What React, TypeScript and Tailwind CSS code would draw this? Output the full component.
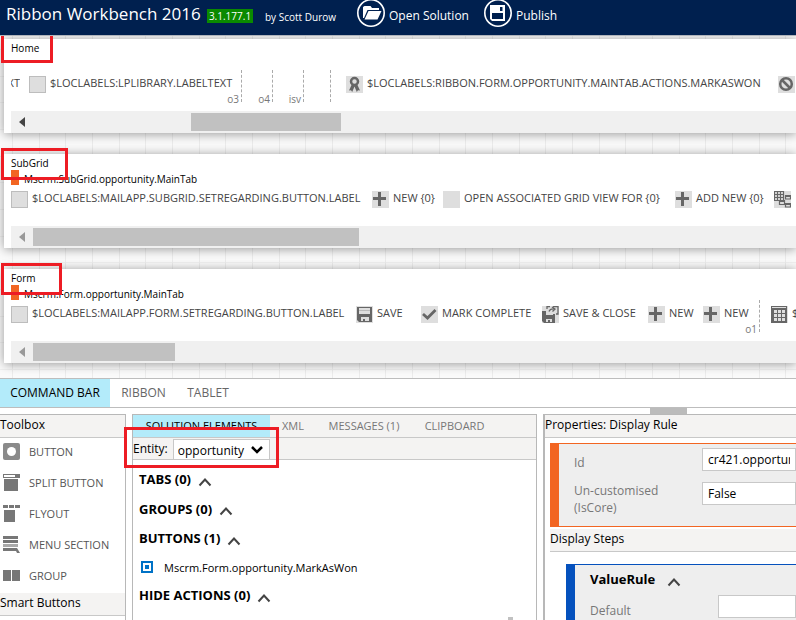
import React from "react";

const plain = (
  <svg viewBox="0 0 17 17" className="size-[17px] shrink-0">
    <rect x="0.5" y="0.5" width="16" height="16" fill="#dedede" stroke="#bdbdbd" />
  </svg>
);

function Icon({ children }: { children?: React.ReactNode }) {
  return (
    <svg viewBox="0 0 17 17" className="size-[17px] shrink-0 bg-[#dedede]" fill="#666">
      {children}
    </svg>
  );
}

const plus = (
  <Icon>
    <path d="M6 1h3v5h5v3H9v6H6V9H1V6h5z" />
  </Icon>
);
const award = (
  <Icon>
    <circle cx="8.500" cy="5.500" r="3.500" fill="none" stroke="#666" strokeWidth="2.500" />
    <path d="M5.500 9l-2.500 5.500 2-.3 1.200 1.800 2.300-5.500 2.300 5.500 1.200-1.800 2 .3L11.500 9z" />
  </Icon>
);
const ban = (
  <Icon>
    <g fill="none" stroke="#666" strokeWidth="2.500">
      <circle cx="8" cy="8" r="5.800" />
      <path d="M4 4l8 8" />
    </g>
  </Icon>
);
const disk = (
  <Icon>
    <path d="M1 1h15v15H3l-2-2zM3 2v6h11V2zM5 11v4h2v-2h2v2h4v-4z" fillRule="evenodd" />
    <path d="M3 4h11v1H3z" fill="#bbb" />
  </Icon>
);
const check = (
  <Icon>
    <path d="M2 8l4.500 4L14.500 4" fill="none" stroke="#666" strokeWidth="2.800" />
  </Icon>
);
const saveClose = (
  <Icon>
    <path d="M0 5h4v4h7V8h2v9H2l-2-2zM4 13v3h2v-2h2v2h2v-3z" fillRule="evenodd" />
    <path d="M5 3V.700h3M11 .700h5V8h-2M7 5.500c1-3 3-3 6-2.500M10 1l3 2-2.500 2.500" fill="none" stroke="#666" strokeWidth="1.300" />
  </Icon>
);
const table = (
  <Icon>
    <path
      d="M0 0h16v17H0zM1 1v1h14V1zM3 4v3h3V4zm4 0v3h3V4zm4 0v3h3V4zM3 8v3h3V8zm4 0v3h3V8zm4 0v3h3V8zM3 12v3h3v-3zm4 0v3h3v-3zm4 0v3h3v-3z"
      fillRule="evenodd"
    />
  </Icon>
);
const gridTree = (
  <Icon>
    <path d="M.5.500h9v9h-9zM.5 3.500h9M.5 6.500h9M3.500.5v9M6.500.5v9M5.500 9.500h5v4h-5zM11.500 5h5v3h-5zM11.500 12.500h5v3.500h-5z" fill="none" stroke="#666" strokeWidth="1.200" />
    <path d="M11 4h6v2h-6zM11 12h6v2h-6zM5 9h6v2H5z" />
  </Icon>
);

function Command({ icon, label, className = "" }: { icon?: React.ReactNode; label: string; className?: string }) {
  return (
    <button type="button" className={`flex h-[17px] shrink-0 items-center gap-1 text-left text-[11px] leading-[15px] whitespace-nowrap text-[#444] ${className}`}>
      {icon}
      <span className="pb-1">{label}</span>
    </button>
  );
}

function Group({ name, className = "", children }: { name: string; className?: string; children?: React.ReactNode }) {
  return (
    <div className={`relative flex h-8 shrink-0 border-r border-dashed border-[#aaa] pt-[6px] ${className}`}>
      {children}
      <span className="absolute right-[2px] bottom-[-4px] text-[10px] leading-[14px] text-[#777]">{name}</span>
    </div>
  );
}

function Area({ title, tab, thumb, active = false, mark, children }: { title: string; tab?: string; thumb: string; active?: boolean; mark: string; children: React.ReactNode }) {
  return (
    <section className="relative ml-1 bg-white pl-[7px] shadow-[0_1px_10px_rgba(0,0,0,0.4)]">
      <h2 className="h-4 pt-[2px] text-[10px] leading-[14px]">{title}</h2>
      <div className="flex h-[15px] gap-[5px]">
        {tab && <span className="h-full w-2 bg-[#f26522]" />}
        {tab && <span className="pt-[2px] text-[10px] leading-[14px]">{tab}</span>}
      </div>
      <div className="flex h-[41px] overflow-hidden">{children}</div>
      <div className="flex h-[22px] items-center bg-[#f0f0f0]">
        <svg viewBox="0 0 22 22" className="w-[22px] shrink-0">
          <path d="M14 6v10l-6-5z" fill={active ? "#444" : "#999"} />
        </svg>
        <span className={`h-[18px] bg-[#c1c1c1] ${thumb}`} />
      </div>
      <span className={`pointer-events-none absolute border-[3px] border-[#ed1c24] ${mark}`} />
    </section>
  );
}

function Caret() {
  return (
    <svg viewBox="0 0 14 10" className="mt-1 w-[14px] shrink-0">
      <path d="M1.500 8.500L7 2.500l5.500 6" fill="none" stroke="#444" strokeWidth="2" />
    </svg>
  );
}

function Tool({ label, children }: { label: string; children: React.ReactNode }) {
  return (
    <button type="button" className="flex h-[27px] items-center gap-[9px] pl-[3px] text-[11px] leading-4 whitespace-nowrap text-[#555]">
      <svg viewBox="0 0 17 17" className="size-[17px] shrink-0" fill="#777">
        {children}
      </svg>
      {label}
    </button>
  );
}

const bar = "h-[23px] shrink-0 border-b border-[#c8c8c8] bg-[#f4f3f2] leading-5 whitespace-nowrap";
const field = "h-[23px] min-w-0 flex-1 border border-[#c8c8c8] bg-white px-[5px] text-[12px] leading-4 text-black";

export default function App() {
  return (
    <div className="flex h-screen flex-col overflow-hidden bg-white font-['Open_Sans','Noto_Sans',sans-serif] text-black">
      <header className="flex h-9 shrink-0 items-start border-b border-[#b0b4bb] bg-[#00204f] pl-[6px] whitespace-nowrap text-white">
        <h1 className="w-[201px] text-[17px] leading-7">Ribbon Workbench 2016</h1>
        <span className="mt-[9px] h-[14px] w-[46px] bg-[#0a8a00] text-center text-[10px] leading-[14px]">3.1.177.1</span>
        <span className="mt-[9px] ml-3 w-[92px] text-[10px] leading-4">by Scott Durow</span>
        <button type="button" className="flex w-[127px] items-start gap-1 text-[12px] leading-8">
          <svg viewBox="0 0 28 28" className="size-7" fill="none">
            <circle cx="14" cy="13" r="13.200" stroke="#fff" strokeWidth="1.600" />
            <path d="M6 18V7l1.500-1h6L15 8h7v2H10.500L7 18z" fill="#fff" />
            <path d="M7.500 19.500L11.500 11h13l-4 8.500z" fill="#fff" />
          </svg>
          Open Solution
        </button>
        <button type="button" className="flex items-start gap-1 text-[12px] leading-8">
          <svg viewBox="0 0 28 28" className="size-7" fill="none">
            <circle cx="14" cy="13" r="13.200" stroke="#fff" strokeWidth="1.600" />
            <path d="M6 5h15v16H8l-2-2zM8 13v6h11v-6zM16 7h2.500v4H16z" fill="#fff" fillRule="evenodd" />
          </svg>
          Publish
        </button>
      </header>

      <main className="flex shrink-0 flex-col gap-[21px] overflow-hidden bg-[#fafafa] bg-[linear-gradient(90deg,#ececec_1px,transparent_1px,transparent_27px,#ececec_27px,#ececec_28px,transparent_28px,transparent_53px,#ececec_53px,#ececec_54px,transparent_54px),linear-gradient(#f0f0f0_1px,transparent_1px,transparent_27px,#f0f0f0_27px,#f0f0f0_28px,transparent_28px,transparent_53px,#f0f0f0_53px,#f0f0f0_54px,transparent_54px)] bg-size-[80px_80px] bg-position-[12px_13px] pt-[3px] pb-[15px]">
        <Area title="Home" active thumb="ml-[158px] w-[150px]" mark="-top-[6px] -left-[3px] h-[30px] w-[52px]">
          <Group name="o3" className="w-[231px]">
            <span className="flex w-[9px] shrink-0 justify-end overflow-hidden text-[11px] leading-[13px] text-[#444]">LABELTEXT</span>
            <Command icon={plain} label="$LOCLABELS:LPLIBRARY.LABELTEXT" className="ml-[9px]" />
          </Group>
          <Group name="o4" className="w-[31px]" />
          <Group name="isv" className="w-[31px]" />
          <Group name="" className="w-[27px]" />
          <div className="flex pt-[6px] pl-[15px]">
            <Command icon={award} label="$LOCLABELS:RIBBON.FORM.OPPORTUNITY.MAINTAB.ACTIONS.MARKASWON" className="w-[432px]" />
            <Command icon={ban} label="" />
          </div>
        </Area>
        <Area title="SubGrid" tab="Mscrm.SubGrid.opportunity.MainTab" thumb="w-[326px]" mark="-top-[6px] -left-[3px] h-8 w-[67px]">
          <div className="flex pt-[6px]">
            <Command icon={plain} label="$LOCLABELS:MAILAPP.SUBGRID.SETREGARDING.BUTTON.LABEL" className="w-[361px]" />
            <Command icon={plus} label="NEW {0}" className="w-[71px]" />
            <Command icon={<Icon />} label="OPEN ASSOCIATED GRID VIEW FOR {0}" className="w-[232px]" />
            <Command icon={plus} label="ADD NEW {0}" className="w-[99px]" />
            <Command icon={gridTree} label="" />
          </div>
        </Area>
        <Area title="Form" tab="Mscrm.Form.opportunity.MainTab" thumb="w-[142px]" mark="-top-[6px] -left-[3px] h-8 w-[61px]">
          <Group name="o1" className="w-[749px]">
            <Command icon={plain} label="$LOCLABELS:MAILAPP.FORM.SETREGARDING.BUTTON.LABEL" className="w-[345px]" />
            <Command icon={disk} label="SAVE" className="w-[65px]" />
            <Command icon={check} label="MARK COMPLETE" className="w-[121px]" />
            <Command icon={saveClose} label="SAVE & CLOSE" className="w-[106px]" />
            <Command icon={plus} label="NEW" className="w-[55px]" />
            <Command icon={plus} label="NEW" />
          </Group>
          <div className="flex pt-[6px] pl-[11px]">
            <Command icon={table} label="$LOCLABELS" />
          </div>
        </Area>
      </main>

      <nav className="flex h-[30px] shrink-0 border-y border-[#bdbdbd] text-[12px] text-[#666]">
        <button type="button" className="w-[110px] bg-[#b3ebfa] text-black">COMMAND BAR</button>
        <button type="button" className="w-[67px]">RIBBON</button>
        <button type="button" className="w-[62px]">TABLET</button>
      </nav>
      <div className="flex h-[6px] shrink-0 pl-[650px]">
        <span className="w-[37px] bg-[#bbb]" />
      </div>

      <div className="flex min-h-0 flex-1 gap-[6px]">
        <aside className="flex w-[126px] shrink-0 flex-col overflow-hidden border-t border-r border-[#b8b8b8]">
          <h2 className={`${bar} text-[12px]`}>Toolbox</h2>
          <div className="flex shrink-0 flex-col gap-1 pb-1">
            <Tool label="BUTTON">
              <rect width="17" height="17" rx="2" fill="#8a8a8a" />
              <circle cx="8.500" cy="8.500" r="4.500" fill="#fff" />
            </Tool>
            <Tool label="SPLIT BUTTON">
              <path d="M0 0h17v4H0zM1 1v2h11V1zM1 5h14v12H1z" fillRule="evenodd" />
            </Tool>
            <Tool label="FLYOUT">
              <path d="M0 0h5v3H0zM6 0h5v3H6zM12 0h5v3h-5zM1 5h11v12H1z" />
            </Tool>
            <Tool label="MENU SECTION">
              <path d="M0 0h15v3H0zM0 4h15v3H0zM0 12h14l3 5h-3l-1-2H0z" />
              <path d="M0 8h15v3H0z" fill="#aaa" />
            </Tool>
            <Tool label="GROUP">
              <path d="M0 3h8v11H0zM9 3h8v11H9z" />
            </Tool>
          </div>
          <h2 className={`${bar} text-[12px]`}>Smart Buttons</h2>
          <div className="mt-1 ml-[3px] size-[17px] shrink-0 bg-[#dedede]" />
        </aside>

        <section className="relative flex w-[405px] shrink-0 flex-col border border-b-0 border-[#b8b8b8]">
          <div className={`${bar} flex text-[11px] text-[#777]`}>
            <button type="button" className="w-[137px] bg-[#b3ebfa] text-black">SOLUTION ELEMENTS</button>
            <button type="button" className="w-[46px]">XML</button>
            <button type="button" className="w-[96px]">MESSAGES (1)</button>
            <button type="button" className="w-[85px]">CLIPBOARD</button>
          </div>
          <div className="flex h-[22px] shrink-0 items-end gap-[5px] border-b border-[#c8c8c8] bg-[#f4f3f2]">
            <label htmlFor="entity" className="text-[12px] leading-5">Entity:</label>
            <div className="relative flex">
              <select id="entity" className="h-5 w-[97px] appearance-none border border-b-0 border-[#c8c8c8] bg-white pt-[2px] pl-1 text-[12px] leading-[17px]">
                <option>opportunity</option>
              </select>
              <svg viewBox="0 0 12 8" className="pointer-events-none absolute top-[7px] right-[7px] w-3">
                <path d="M1 1l5 5 5-5" fill="none" stroke="#000" strokeWidth="2.500" />
              </svg>
            </div>
          </div>
          <div className="flex flex-col pt-[5px] pl-[6px] text-[13px] leading-[29px] font-bold">
            <button type="button" className="flex h-[29px] items-center gap-[7px]">TABS (0) <Caret /></button>
            <button type="button" className="flex h-[30px] items-center gap-[7px]">GROUPS (0) <Caret /></button>
            <button type="button" className="flex h-[29px] items-center gap-[7px]">BUTTONS (1) <Caret /></button>
            <button type="button" className="flex h-7 items-center gap-[11px] pl-[2px] text-[11px] font-normal">
              <svg viewBox="0 0 12 12" className="size-3">
                <rect x="1" y="1" width="10" height="10" fill="none" stroke="#0072c6" strokeWidth="2" />
                <path d="M4 4h4v4H4z" fill="#0072c6" />
              </svg>
              Mscrm.Form.opportunity.MarkAsWon
            </button>
            <button type="button" className="flex h-[29px] items-center gap-[7px]">HIDE ACTIONS (0) <Caret /></button>
          </div>
          <span className="absolute right-[23px] bottom-0 h-[3px] w-[5px] bg-[#c1c1c1]" />
          <span className="pointer-events-none absolute top-3 -left-[9px] h-[41px] w-[155px] border-[3px] border-[#ed1c24]" />
        </section>

        <section className="flex min-w-0 flex-1 flex-col overflow-hidden border-t border-l-2 border-[#b8b8b8]">
          <h2 className={`${bar} text-[12px]`}>Properties: Display Rule</h2>
          <div className="mt-[5px] ml-[5px] flex h-[84px] shrink-0 flex-col gap-[10px] border-y border-l-[9px] border-[#f26522] bg-[#eee] pt-1 pl-[15px] text-[12px] text-[#777]">
            <div className="flex">
              <label htmlFor="id" className="w-32 pt-[6px] leading-[18px]">Id</label>
              <input id="id" defaultValue="cr421.opportunity.MarkAsWon" className={field} />
            </div>
            <div className="flex">
              <label htmlFor="core" className="w-32 leading-[17px]">Un-customised<br />(IsCore)</label>
              <input id="core" defaultValue="False" className={field} />
            </div>
          </div>
          <h3 className={`${bar} mt-[2px] ml-[5px] text-[12px]`}>Display Steps</h3>
          <div className="mt-3 ml-[21px] flex flex-1 flex-col border-t border-l-[9px] border-[#0551bd] bg-[#eee] pl-[15px] text-[12px] text-[#777]">
            <button type="button" className="flex h-[30px] shrink-0 items-center gap-3 text-[13px] font-bold text-black">ValueRule <Caret /></button>
            <div className="flex shrink-0">
              <label htmlFor="default" className="w-32 pt-[7px] leading-[18px]">Default</label>
              <input id="default" className={field} />
            </div>
          </div>
        </section>
      </div>
    </div>
  );
}
